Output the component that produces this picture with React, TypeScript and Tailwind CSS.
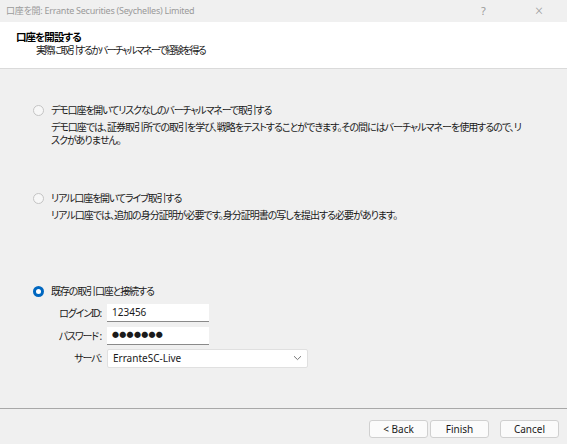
import React from "react";

const jp = "font-['Noto_Sans','Noto_Sans_CJK_JP',sans-serif] [font-feature-settings:'palt']";
const jpText = "text-[10px] tracking-[-1.15px] text-[#1a1a1a]";

function Radio({ checked }: { checked?: boolean }) {
  if (checked) {
    return (
      <span className="w-[11px] h-[11px] rounded-full bg-[#0067c0] flex items-center justify-center shrink-0">
        <span className="w-[5px] h-[5px] rounded-full bg-white" />
      </span>
    );
  }
  return <span className="w-[11px] h-[11px] rounded-full border border-[#c4c4c4] bg-[#f7f7f7] shrink-0" />;
}

function Option({
  label,
  desc,
  checked,
}: {
  label: string;
  desc?: React.ReactNode;
  checked?: boolean;
}) {
  return (
    <div className="flex flex-col">
      <div className="flex items-center gap-[7px] h-[12px]">
        <Radio checked={checked} />
        <span className={`${jpText} leading-[12px] tracking-[-1.3px]`}>{label}</span>
      </div>
      {desc && (
        <div className={`pl-[18px] mt-[5px] leading-[13px] whitespace-nowrap ${jpText} tracking-[-1px]`}>{desc}</div>
      )}
    </div>
  );
}

function Field({ label, children }: { label: string; children: React.ReactNode }) {
  return (
    <div className="flex items-center gap-[6px] h-[18px]">
      <span className={`w-[50px] text-right whitespace-nowrap leading-[18px] ${jpText}`}>{label}</span>
      {children}
    </div>
  );
}

function Btn({ children }: { children: React.ReactNode }) {
  return (
    <button className="w-[59px] h-[18px] rounded-[3px] border border-[#d0d0d0] bg-[#fbfbfb] text-[10px] leading-none text-[#1a1a1a]">
      {children}
    </button>
  );
}

export default function App() {
  return (
    <div className={`w-[567px] h-[444px] flex flex-col bg-[#f0f0f0] overflow-hidden ${jp}`}>
      {/* title bar */}
      <div className="h-[22px] flex items-center pl-[6px] text-[9px] tracking-[-0.25px] text-[#9a9a9a]">
        <span className="flex-1">口座を開: Errante Securities (Seychelles) Limited</span>
        <span className="w-[54px] text-[11px]">?</span>
        <span className="w-[32px] text-[14px] font-light leading-none">×</span>
      </div>

      {/* header */}
      <div className="h-[47px] bg-white border-b border-[#dadada] pl-[16px] pt-[9px]">
        <div className="text-[10.5px] font-bold leading-[13px] tracking-[-0.9px] text-black">口座を開設する</div>
        <div className="pl-[20px] text-[10px] leading-[13px] tracking-[-1.8px] text-[#1a1a1a]">
          実際に取引するかバーチャルマネーで経験を得る
        </div>
      </div>

      {/* body */}
      <div className="flex-1 flex flex-col pl-[33px] pt-[35px]">
        <Option
          label="デモ口座を開いてリスクなしのバーチャルマネーで取引する"
          desc={
            <>
              デモ口座では、証券取引所での取引を学び、戦略をテストすることができます。その間にはバーチャルマネーを使用するので、リ
              <br />
              スクがありません。
            </>
          }
        />
        <div className="h-[45px]" />
        <Option
          label="リアル口座を開いてライブ取引する"
          desc="リアル口座では、追加の身分証明が必要です。身分証明書の写しを提出する必要があります。"
        />
        <div className="h-[63px]" />
        <Option label="既存の取引口座と接続する" checked />
        <div className="flex flex-col gap-[5px] mt-[7px] pl-[18px]">
          <Field label="ログインID:">
            <div className="w-[102px] h-[18px] bg-white border-b border-[#8a8a8a] flex items-center px-[5px] text-[10px] text-[#1a1a1a]">
              123456
            </div>
          </Field>
          <Field label="パスワード :">
            <div className="w-[102px] h-[18px] bg-white border-b border-[#8a8a8a] flex items-center px-[5px] text-[7px] tracking-[0.3px] text-[#1a1a1a]">
              ●●●●●●●
            </div>
          </Field>
          <div className="-mt-[1px]">
            <Field label="サーバ:">
              <div className="w-[201px] h-[19px] bg-white border border-[#e0e0e0] rounded-[2px] flex items-center justify-between px-[5px] text-[10px] text-[#1a1a1a]">
                <span>ErranteSC-Live</span>
                <svg width="9" height="6" viewBox="0 0 9 6">
                  <path d="M1 1.2 L4.5 4.6 L8 1.2" fill="none" stroke="#777" strokeWidth="1" />
                </svg>
              </div>
            </Field>
          </div>
        </div>
      </div>

      {/* footer */}
      <div className="h-[36px] border-t border-[#a8a8a8] flex items-start justify-end pt-[11px] pr-[8px]">
        <div className="flex gap-[2px]">
          <Btn>&lt; Back</Btn>
          <Btn>Finish</Btn>
        </div>
        <div className="w-[11px]" />
        <Btn>Cancel</Btn>
      </div>
    </div>
  );
}
